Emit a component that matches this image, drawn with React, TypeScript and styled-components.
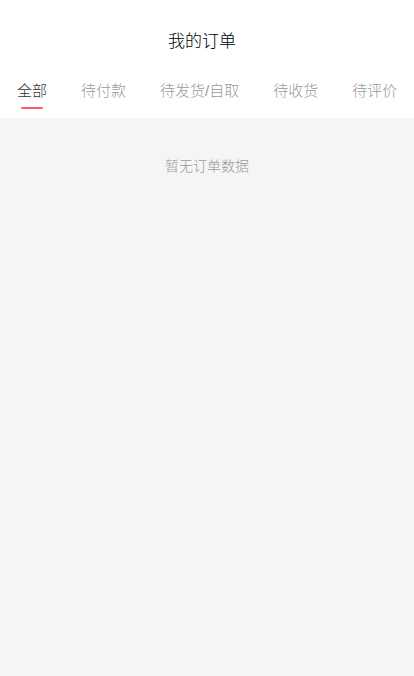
import React, { useState } from "react";
import styled, { createGlobalStyle } from "styled-components";

const Global = createGlobalStyle`
  html, body { margin: 0; padding: 0; background: #f5f5f5; }
  body { font-family: "Liberation Sans", "Noto Sans CJK SC", sans-serif; font-weight: 300; }
  #root { min-height: 676px; }
`;

const Page = styled.div`
  display: flex;
  flex-direction: column;
  min-height: 676px;
  background: #f5f5f5;
`;

const Header = styled.div`
  background: #fff;
`;

const TitleBar = styled.div`
  height: 64px;
  display: flex;
  align-items: center;
  justify-content: center;
  padding: 14px 10px 0 0;
  box-sizing: border-box;
  font-size: 17px;
  color: #000;
`;

const Tabs = styled.div`
  display: flex;
  height: 54px;
  box-sizing: border-box;
`;

const Tab = styled.div<{ $active: boolean }>`
  position: relative;
  padding: 0 17px 2px;
  display: flex;
  align-items: center;
  justify-content: center;
  height: 50px;
  font-size: 15px;
  color: ${(p) => (p.$active ? "#333" : "#999")};
  white-space: nowrap;
  cursor: pointer;
  &::after {
    content: "";
    display: ${(p) => (p.$active ? "block" : "none")};
    position: absolute;
    left: 50%;
    bottom: 7px;
    width: 22px;
    height: 2px;
    margin-left: -11px;
    background: #ff5a73;
    border-radius: 1px;
  }
`;

const Empty = styled.div`
  padding-top: 37px;
  text-align: center;
  font-size: 14px;
  color: #999;
`;

const tabs = ["全部", "待付款", "待发货/自取", "待收货", "待评价"];

export default function App() {
  const [active, setActive] = useState(0);
  return (
    <Page>
      <Global />
      <Header>
        <TitleBar>我的订单</TitleBar>
        <Tabs>
          {tabs.map((t, i) => (
            <Tab key={t} $active={i === active} onClick={() => setActive(i)}>
              {t}
            </Tab>
          ))}
        </Tabs>
      </Header>
      <Empty>暂无订单数据</Empty>
    </Page>
  );
}
